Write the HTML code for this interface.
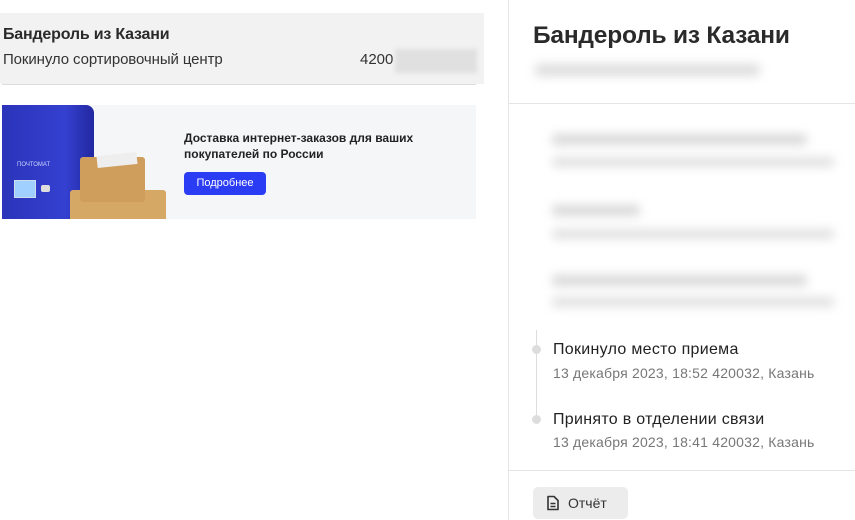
<!DOCTYPE html>
<html><head><meta charset="utf-8"><style>
body{margin:0;width:855px;height:520px;overflow:hidden;background:#fff;font-family:"Liberation Sans",sans-serif;color:#222;position:relative}
.a{position:absolute}
.blur{filter:blur(5px);background:#c8c8c8;border-radius:4px}
</style></head><body>
<div class="a" style="left:0;top:13px;width:484px;height:71px;background:#f2f2f2"></div>
<div class="a" style="left:2px;top:84px;width:474px;height:1px;background:#ddd"></div>
<div class="a" style="left:3px;top:26px;font-size:16px;font-weight:bold;color:#2a2a2a;letter-spacing:-0.2px">Бандероль из Казани</div>
<div class="a" style="left:3px;top:51px;font-size:15px;color:#333;letter-spacing:-0.1px">Покинуло сортировочный центр</div>
<div class="a" style="left:360px;top:51px;font-size:15px;color:#333">4200</div>
<div class="a" style="left:395px;top:49px;width:82px;height:24px;background:#e0e0e0;filter:blur(2px)"></div>

<div class="a" style="left:2px;top:105px;width:474px;height:114px;background:#f5f6f8;overflow:hidden">
 <div class="a" style="left:-4px;top:0;width:96px;height:120px;background:linear-gradient(90deg,#2a33b8,#3440d0 70%,#2228a0);border-radius:0 8px 0 0"></div>
 <div class="a" style="left:15px;top:57px;font-size:6px;color:#cfd6ff">ПОЧТОМАТ</div>
 <div class="a" style="left:12px;top:75px;width:20px;height:16px;background:#9fd0ff;border:1px solid #cde"></div>
 <div class="a" style="left:39px;top:80px;width:9px;height:7px;background:#ddd;border-radius:2px"></div>
 <div class="a" style="left:68px;top:85px;width:96px;height:40px;background:#d6a866;border-radius:3px"></div>
 <div class="a" style="left:78px;top:52px;width:65px;height:45px;background:#cf9e5c;border-radius:3px"></div>
 <div class="a" style="left:95px;top:49px;width:40px;height:12px;background:#eee;transform:rotate(-6deg)"></div>
 <div class="a" style="left:182px;top:25px;font-size:12px;font-weight:bold;color:#222;line-height:16px">Доставка интернет-заказов для ваших<br>покупателей по России</div>
 <div class="a" style="left:182px;top:67px;width:82px;height:23px;background:#2b3cf5;border-radius:4px;color:#fff;font-size:11px;text-align:center;line-height:23px">Подробнее</div>
</div>

<div class="a" style="left:508px;top:0;width:1px;height:520px;background:#e5e5e5"></div>
<div class="a" style="left:533px;top:22px;font-size:24.5px;font-weight:bold;color:#2a2a2a;letter-spacing:-0.2px">Бандероль из Казани</div>
<div class="a blur" style="left:535px;top:64px;width:225px;height:12px;background:#ddd"></div>
<div class="a" style="left:509px;top:103px;width:346px;height:1px;background:#e5e5e5"></div>

<div class="a blur" style="left:552px;top:134px;width:255px;height:11px;background:#d8d8d8"></div>
<div class="a blur" style="left:552px;top:157px;width:282px;height:10px;background:#e0e0e0"></div>
<div class="a blur" style="left:552px;top:205px;width:88px;height:11px;background:#d8d8d8"></div>
<div class="a blur" style="left:552px;top:229px;width:282px;height:10px;background:#e0e0e0"></div>
<div class="a blur" style="left:552px;top:275px;width:255px;height:11px;background:#d8d8d8"></div>
<div class="a blur" style="left:552px;top:297px;width:282px;height:10px;background:#e0e0e0"></div>

<div class="a" style="left:536px;top:330px;width:1px;height:88px;background:#ddd"></div>
<div class="a" style="left:532px;top:345px;width:9px;height:9px;border-radius:50%;background:#ddd"></div>
<div class="a" style="left:532px;top:415px;width:9px;height:9px;border-radius:50%;background:#ddd"></div>
<div class="a" style="left:553px;top:341px;font-size:16px;color:#222;letter-spacing:0.3px">Покинуло место приема</div>
<div class="a" style="left:553px;top:365px;font-size:14px;color:#777;letter-spacing:0.2px">13 декабря 2023, 18:52 420032, Казань</div>
<div class="a" style="left:553px;top:411px;font-size:16px;color:#222;letter-spacing:0.3px">Принято в отделении связи</div>
<div class="a" style="left:553px;top:434px;font-size:14px;color:#777;letter-spacing:0.2px">13 декабря 2023, 18:41 420032, Казань</div>

<div class="a" style="left:509px;top:470px;width:346px;height:1px;background:#e5e5e5"></div>
<div class="a" style="left:533px;top:487px;width:95px;height:32px;background:#ececec;border-radius:5px"></div>
<svg class="a" style="left:546px;top:495px" width="14" height="16" viewBox="0 0 14 16"><path d="M2 1.5h6l4 4v9H2z" fill="none" stroke="#333" stroke-width="1.6" stroke-linejoin="round"/><path d="M4.5 8.5h5M4.5 11.5h5" stroke="#333" stroke-width="1.4"/></svg>
<div class="a" style="left:568px;top:495px;font-size:14px;color:#333">Отчёт</div>
</body></html>
